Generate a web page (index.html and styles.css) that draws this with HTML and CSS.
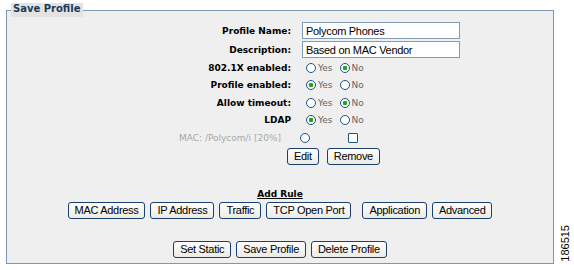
FILE: index.html
```html
<!Doctype html>
<html>
    <head>
        <title>Save Profile</title>
        <link rel="stylesheet" href="styles.css">
    </head>
    <body>
        <div class="page">
            <fieldset class="profile">
                <legend>Save Profile</legend>
                <div class="form-grid">
                    <span class="field-label">Profile Name:</span>
                    <div class="field"><input class="text" type="text" value="Polycom Phones"></div>
                    <span class="field-label">Description:</span>
                    <div class="field"><input class="text" type="text" value="Based on MAC Vendor"></div>

                    <span class="field-label">802.1X enabled:</span>
                    <div class="choices">
                        <label class="choice"><input type="radio" name="dot1x">Yes</label>
                        <label class="choice"><input type="radio" name="dot1x" checked>No</label>
                    </div>
                    <span class="field-label">Profile enabled:</span>
                    <div class="choices">
                        <label class="choice"><input type="radio" name="enabled" checked>Yes</label>
                        <label class="choice"><input type="radio" name="enabled">No</label>
                    </div>
                    <span class="field-label">Allow timeout:</span>
                    <div class="choices">
                        <label class="choice"><input type="radio" name="timeout">Yes</label>
                        <label class="choice"><input type="radio" name="timeout" checked>No</label>
                    </div>
                    <span class="field-label">LDAP</span>
                    <div class="choices">
                        <label class="choice"><input type="radio" name="ldap" checked>Yes</label>
                        <label class="choice"><input type="radio" name="ldap">No</label>
                    </div>
                    <span class="field-label rule-label">MAC: /Polycom/i [20%]</span>
                    <div class="choices rule-choices">
                        <input type="radio" name="rule">
                        <input type="checkbox">
                    </div>
                </div>

                <div class="edit-row">
                    <button>Edit</button>
                    <button>Remove</button>
                </div>

                <div class="add-title">Add Rule</div>
                <div class="btn-row">
                    <button>MAC Address</button>
                    <button>IP Address</button>
                    <button>Traffic</button>
                    <button>TCP Open Port</button>
                    <button class="wide-gap">Application</button>
                    <button>Advanced</button>
                </div>

                <div class="btn-row bottom-row">
                    <button>Set Static</button>
                    <button>Save Profile</button>
                    <button>Delete Profile</button>
                </div>
            </fieldset>
            <div class="figure-id">186515</div>
        </div>
    </body>
</html>
```

FILE: styles.css
```css
body{
    margin: 0;
    padding: 0;
    background: #fff;
}
.page{
    display: flex;
    padding: 3px 0 0 6px;
}
.profile{
    width: 546px;
    margin: 0;
    padding: 4px 0 5px 0;
    border: 1px solid #7d98b0;
    background: #efefef;
    box-sizing: content-box;
}
.profile legend{
    margin-left: 4px;
    padding: 0 2px;
    height: 14px;
    line-height: 14px;
    background: #e3e3e3;
    color: #1b3a5a;
    font: bold 10px "DejaVu Sans", Verdana, sans-serif;
}
.form-grid{
    display: grid;
    grid-template-columns: 284px 1fr;
    grid-template-rows: 19px 19px repeat(5, 17.5px);
    column-gap: 9px;
    align-items: center;
}
.field-label{
    text-align: right;
    font: bold 9px "DejaVu Sans", Verdana, sans-serif;
    color: #000;
}
.rule-label{
    padding-right: 10px;
    font-weight: normal;
    color: #a8a8a8;
}
.field{
    display: flex;
    align-items: center;
}
.text{
    width: 158px;
    height: 17px;
    margin-left: 2px;
    padding: 0 3px;
    box-sizing: border-box;
    border: 1px solid #7f9db9;
    background: #fff;
    font: 11px "Liberation Sans", Arial, sans-serif;
    letter-spacing: -0.3px;
    color: #000;
}
.choices{
    display: flex;
    align-items: center;
    gap: 7px;
    padding-left: 6px;
}
.choice{
    display: inline-flex;
    align-items: center;
    gap: 2px;
    font: 9px "DejaVu Sans", Verdana, sans-serif;
    color: #666;
}
.rule-choices{
    padding-left: 0;
    gap: 38px;
}
input[type="radio"]{
    -webkit-appearance: none;
    appearance: none;
    width: 10px;
    height: 10px;
    margin: 0;
    border: 1px solid #1d5281;
    border-radius: 50%;
    background: #fff;
}
input[type="radio"]:checked{
    background: radial-gradient(circle, #25a025 0, #25a025 2px, #fff 2.6px);
}
input[type="checkbox"]{
    -webkit-appearance: none;
    appearance: none;
    width: 10px;
    height: 10px;
    margin: 0;
    border: 1px solid #1d5281;
    border-radius: 1px;
    background: #fff;
}
button{
    height: 17px;
    padding: 0 6px;
    border: 1px solid #1c3f6b;
    border-radius: 3px;
    background: linear-gradient(#fefefe, #ecebe4);
    font: 11px "Liberation Sans", Arial, sans-serif;
    letter-spacing: -0.3px;
    color: #000;
    line-height: 15px;
}
.edit-row{
    display: flex;
    gap: 8px;
    margin-top: 1px;
    padding-left: 280px;
}
.add-title{
    margin-top: 24px;
    text-align: center;
    font: bold 9px "DejaVu Sans", Verdana, sans-serif;
    text-decoration: underline;
    color: #000;
}
.btn-row{
    display: flex;
    justify-content: center;
    gap: 5px;
    margin-top: 3px;
}
.btn-row .wide-gap{
    margin-left: 6px;
}
.bottom-row{
    margin-top: 22px;
}
.figure-id{
    align-self: flex-end;
    margin: 0 0 2px 5px;
    writing-mode: vertical-rl;
    transform: rotate(180deg);
    font: 11px "Liberation Sans", Arial, sans-serif;
    color: #000;
}
```
